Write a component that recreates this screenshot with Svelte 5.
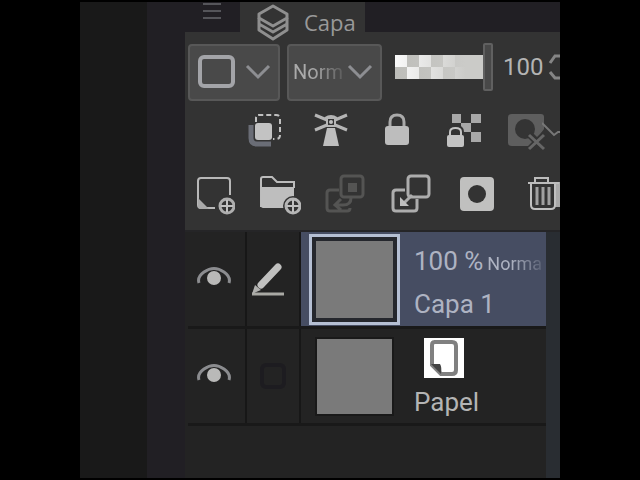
<script lang="ts">
	type Layer = {
		name: string;
		opacity?: string;
		mode?: string;
		paper?: boolean;
	};

	const layers: Layer[] = [
		{ name: 'Capa 1', opacity: '100 %', mode: 'Norma' },
		{ name: 'Papel', paper: true }
	];

	let selected = $state('Capa 1');
	let opacity = $state(100);
</script>

<main class="stage">
	<div class="canvas"></div>
	<div class="gutter"></div>
	<section class="panel" aria-label="Capa">
		<header class="tabs">
			<button class="menu" aria-label="Menu">
				<svg width="18" height="18" viewBox="0 0 18 18">
					<path d="M0 2h18M0 9h18M0 16h18" stroke="#55555a" stroke-width="2" />
				</svg>
			</button>
			<button class="tab">
				<svg width="34" height="38" viewBox="0 0 34 38" fill="none" stroke="#8f8f8f" stroke-width="3" stroke-linejoin="round">
					<path d="M17 3 31 11v4L17 23 3 15v-4z" />
					<path d="M3 15v6l14 8 14-8v-6M3 21v6l14 9 14-9v-6" />
				</svg>
				<span>Capa</span>
			</button>
		</header>

		<div class="options">
			<button class="box" aria-label="Layer colour">
				<svg width="38" height="34" viewBox="0 0 38 34" fill="none">
					<rect x="2" y="2" width="33" height="29" rx="4" stroke="#a3a4a8" stroke-width="4" />
				</svg>
				<svg class="chevron" width="28" height="18" viewBox="0 0 28 18" fill="none">
					<path d="M3 3 14 14 25 3" stroke="#8d8e92" stroke-width="3" />
				</svg>
			</button>
			<div class="box mode">
				<select aria-label="Blending mode">
					<option>Norm</option>
				</select>
				<svg class="chevron" width="28" height="18" viewBox="0 0 28 18" fill="none">
					<path d="M3 3 14 14 25 3" stroke="#8d8e92" stroke-width="3" />
				</svg>
			</div>
			<input class="slider" type="range" min="0" max="100" bind:value={opacity} aria-label="Opacity" />
			<input class="amount" type="text" bind:value={opacity} aria-label="Opacity value" />
			<button class="spin" aria-label="Change value">
				<svg width="22" height="30" viewBox="0 0 22 30" fill="none" stroke="#858585" stroke-width="3">
					<path d="M2 11 7 4h8l5 7M2 20l5 6h8l5-6" />
				</svg>
			</button>
		</div>

		<div class="tools first">
			<button aria-label="Clip to layer below">
				<svg width="42" height="42" viewBox="0 0 42 42" fill="none">
					<path d="M7 16v13q0 6 6 6h14" stroke="#6a6d76" stroke-width="5" />
					<rect x="11" y="14" width="17" height="17" rx="3" fill="#c3c3c3" />
					<path d="M12 13V9q0-3 3-3h17q4 0 4 4v16q0 4-4 4h-3" stroke="#c0c0c0" stroke-width="2" stroke-dasharray="5 3" />
				</svg>
			</button>
			<button aria-label="Reference layer">
				<svg width="42" height="42" viewBox="0 0 42 42" fill="none">
					<path d="M5 6 17 11M5 21l12-5M37 6l-12 5M37 21l-12-5" stroke="#b5b5b5" stroke-width="3" />
					<path d="M15 9q6-4 12 0" stroke="#b5b5b5" stroke-width="2" />
					<rect x="17" y="9" width="8" height="8" stroke="#b5b5b5" stroke-width="2" />
					<circle cx="21" cy="13" r="2" fill="#bebebe" />
					<path d="M17 19h8l4 18H13z" fill="#bebebe" />
				</svg>
			</button>
			<button aria-label="Lock layer">
				<svg width="42" height="42" viewBox="0 0 42 42" fill="none">
					<path d="M14 18v-5q0-7 7-7t7 7v5" stroke="#aaa" stroke-width="3" />
					<rect x="9" y="17" width="24" height="19" rx="3" fill="#bdbdbd" />
				</svg>
			</button>
			<button aria-label="Lock transparent pixels">
				<svg width="42" height="42" viewBox="0 0 42 42" fill="none">
					<path d="M10 5h9v9h-9zM29 5h10v9H29zM19 14h10v9H19zM29 23h10v10H29z" fill="#a8a8a8" />
					<path d="M8 27v-4q0-4 5.500-4t5.500 4v4" stroke="#333" stroke-width="6" />
					<path d="M8 27v-4q0-4 5.500-4t5.500 4v4" stroke="#c3c3c3" stroke-width="2" />
					<rect x="5" y="26" width="17" height="12" rx="2" fill="#c3c3c3" />
				</svg>
			</button>
			<button aria-label="Enable mask">
				<svg width="42" height="42" viewBox="0 0 42 42" fill="none">
					<path d="M4 5h29q3 0 3 3v12l-12 17H4q-4 0-4-3V8q0-3 4-3z" fill="#5e5e5e" />
					<circle cx="17" cy="20" r="10" fill="#343434" />
					<path d="m21 25 16 16M37 25 21 41" stroke="#333" stroke-width="7" />
					<path d="m21 26 15 14M36 26 21 40" stroke="#666" stroke-width="3" />
				</svg>
			</button>
			<button class="ruler" aria-label="Ruler range">
				<svg width="24" height="42" viewBox="0 0 24 42" fill="none">
					<path d="M0 14 12 26l4-3h8" stroke="#777" stroke-width="2" />
				</svg>
			</button>
		</div>

		<div class="tools">
			<button aria-label="New raster layer">
				<svg width="42" height="42" viewBox="0 0 42 42" fill="none">
					<path d="M22 35H8q-3 0-3-3V8q0-3 3-3h26q3 0 3 3v14" stroke="#b8b8b8" stroke-width="2" />
					<path d="M5 25 16 36H8q-3 0-3-3z" fill="#aaa" />
					<circle cx="34" cy="33" r="10" fill="#333" />
					<circle cx="34" cy="33" r="7" stroke="#aeaeae" stroke-width="3" />
					<path d="M34 27v12M28 33h12" stroke="#c0c0c0" stroke-width="2" />
				</svg>
			</button>
			<button aria-label="New layer folder">
				<svg width="42" height="42" viewBox="0 0 42 42" fill="none">
					<path d="M2 34V6q0-2 2-2h9l5 5h17v6" stroke="#bcbcbc" stroke-width="2" />
					<path d="M2 14h33v21H4q-2 0-2-2z" fill="#bebebe" />
					<circle cx="34" cy="33" r="10" fill="#333" />
					<circle cx="34" cy="33" r="7" stroke="#b5b5b5" stroke-width="3" />
					<path d="M34 27v12M28 33h12" stroke="#c0c0c0" stroke-width="2" />
				</svg>
			</button>
			<button aria-label="Transfer to lower layer">
				<svg width="42" height="42" viewBox="0 0 42 42" fill="none" stroke="#545453" stroke-width="3">
					<rect x="16" y="3" width="22" height="21" rx="3" />
					<path d="M23 10h9v9h-9z" fill="#545453" stroke="none" />
					<path d="M14 17H5q-3 0-3 3v15q0 3 3 3h17q3 0 3-3M26 25q0 7-8 7h-7M16 26l-6 6 6 5" />
				</svg>
			</button>
			<button aria-label="Combine with layer below">
				<svg width="42" height="42" viewBox="0 0 42 42" fill="none" stroke="#adadad" stroke-width="3">
					<rect x="17" y="3" width="21" height="21" rx="3" />
					<path d="M14 17H5q-3 0-3 3v15q0 3 3 3h18q3 0 3-3v-9" />
					<path d="m21 22-9 9" />
					<path d="m9 24 9 9H9z" fill="#c0c0c0" stroke="none" />
				</svg>
			</button>
			<button aria-label="Create layer mask">
				<svg width="42" height="42" viewBox="0 0 42 42">
					<rect x="3" y="4" width="34" height="34" rx="4" fill="#c0c0bf" />
					<circle cx="20" cy="21" r="9" fill="#333" />
				</svg>
			</button>
			<button aria-label="Delete layer">
				<svg width="42" height="42" viewBox="0 0 42 42" fill="none">
					<path d="M30 9h12v25H28z" fill="#aaa" />
					<path d="M8 10h24v22q0 4-4 4H12q-4 0-4-4z" fill="#333" stroke="#c0c0c0" stroke-width="2" />
					<path d="M5 10h31M12 9V5h13v4" stroke="#bcbcbc" stroke-width="2" />
					<path d="M14 14v18M20 14v18M26 14v18" stroke="#a0a0a0" stroke-width="3" />
				</svg>
			</button>
		</div>

		<div class="list">
			<ul>
				{#each layers as layer}
					<li class:active={layer.name === selected}>
						<button class="eye" aria-label="Show or hide {layer.name}">
							<svg width="34" height="22" viewBox="0 0 34 22" fill="none">
								<path d="M2 17q-2-6 5-11 10-7 20 0 7 5 5 11" stroke="#8b8c8f" stroke-width="3" />
								<circle cx="17" cy="12" r="7" fill="#b9b9b8" />
							</svg>
						</button>
						<div class="edit">
							{#if layer.name === selected}
								<svg width="44" height="34" viewBox="0 0 44 34" fill="none">
									<path d="M1 32h32" stroke="#a9a9a4" stroke-width="3" />
									<path d="M10 23 27 5" stroke="#c0c0bf" stroke-width="7" stroke-linecap="round" />
									<path d="M4 23 10 28 1 32z" fill="#b0b0ae" />
								</svg>
							{:else}
								<svg width="28" height="28" viewBox="0 0 28 28" fill="none">
									<rect x="3" y="3" width="22" height="22" rx="4" stroke="#1d1c20" stroke-width="4" />
								</svg>
							{/if}
						</div>
						<button class="layer" onclick={() => (selected = layer.name)}>
							<span class="thumb"></span>
							<span class="info">
								{#if layer.paper}
									<svg class="paper" width="40" height="40" viewBox="0 0 40 40">
										<path d="M0 0h40v40H0z" fill="#fff" />
										<path d="M10 4h18q4 0 4 4v24q0 4-4 4H17L8 27V7q0-3 3-3z" fill="#fff" stroke="#808080" stroke-width="4" />
										<path d="M7 26h9q2 3 1 10z" fill="#444" />
									</svg>
								{:else}
									<span class="status">
										<span>{layer.opacity}</span>
										<span class="fade">{layer.mode}</span>
									</span>
								{/if}
								<span>{layer.name}</span>
							</span>
						</button>
					</li>
				{/each}
			</ul>
			<div class="scrollbar"></div>
		</div>
	</section>
</main>

<style>
	:global(body) {
		margin: 0;
		background: #000;
	}

	* {
		box-sizing: border-box;
	}

	.stage {
		display: flex;
		min-height: 100vh;
		padding: 2px 12.5%;
		font-family: Roboto, sans-serif;
		font-size: 26px;
		line-height: 32px;
		color: #b4b4b4;
	}

	button,
	select,
	input {
		margin: 0;
		padding: 0;
		border: 0;
		background: none;
		font: inherit;
		color: inherit;
	}

	svg {
		display: block;
		flex: none;
	}

	.canvas {
		flex: 0 0 67px;
		background: #191919;
	}

	.gutter {
		flex: 0 0 38px;
		background: #211f24;
	}

	.panel {
		flex: 1;
		min-width: 0;
		display: flex;
		flex-direction: column;
		overflow: hidden;
		background: #333;
	}

	.tabs {
		display: flex;
		height: 30px;
		background: #211f24;
	}

	.menu {
		display: flex;
		width: 55px;
		padding-left: 18px;
	}

	.tab {
		display: flex;
		align-items: center;
		gap: 14px;
		width: 125px;
		height: 40px;
		padding-left: 16px;
		background: #333;
		font-family: 'Open Sans', sans-serif;
		font-size: 22px;
		color: #999;
	}

	.options {
		display: flex;
		align-items: center;
		padding: 11px 0 0 3px;
	}

	.box {
		display: flex;
		flex: none;
		align-items: center;
		width: 92px;
		height: 57px;
		margin-right: 7px;
		padding: 0 6px 0 8px;
		border: 2px solid #585858;
		border-radius: 4px;
		background: #494949;
	}

	.chevron {
		margin-left: auto;
	}

	.mode {
		position: relative;
		width: 95px;
		margin-right: 13px;
		padding: 0 6px 0 4px;
	}

	.mode select {
		appearance: none;
		flex: 0 0 100%;
		height: 32px;
		font-size: 20px;
		color: #aaa;
		mask-image: linear-gradient(90deg, #000 20px, #0003 50px);
	}

	.mode .chevron {
		position: absolute;
		right: 6px;
		pointer-events: none;
	}

	.slider {
		appearance: none;
		flex: none;
		width: 98px;
		height: 48px;
		background:
			linear-gradient(90deg, transparent, #cbcbc8 80%) 0 50% / 88px 24px no-repeat,
			repeating-conic-gradient(#bdbdb9 0 25%, #fafafa 0 50%) 0 12px / 24px 24px repeat-x;
	}

	.slider::-webkit-slider-thumb {
		appearance: none;
		width: 10px;
		height: 48px;
		border: 2px solid #606060;
		border-radius: 2px;
		background: #484848;
	}

	.slider,
	.amount,
	.spin {
		margin-bottom: 10px;
	}

	.amount {
		flex: none;
		width: 45px;
		height: 32px;
		margin-left: 10px;
		font-size: 24px;
	}

	.spin {
		flex: none;
	}

	.tools {
		display: flex;
		gap: 24px;
		padding: 22px 0 15px 8px;
	}

	.tools button {
		flex: none;
	}

	.tools.first {
		padding: 8px 0 0 59px;
	}

	.tools .ruler {
		margin-left: -32px;
	}

	.list {
		flex: 1;
		display: flex;
		border-top: 2px solid #252527;
		background: #232323;
	}

	ul {
		flex: 1;
		margin: 0;
		padding: 0 0 0 3px;
		list-style: none;
	}

	.scrollbar {
		width: 14px;
		background: #292d32;
	}

	li {
		display: flex;
		height: 97px;
		border-bottom: 3px solid #191919;
	}

	.eye,
	.edit {
		display: flex;
		flex: none;
		align-items: center;
		justify-content: center;
		border-right: 2px solid #171717;
	}

	.eye {
		width: 59px;
		padding: 0 6px 4px 0;
	}

	.edit {
		width: 54px;
	}

	.layer {
		flex: 1;
		display: flex;
		align-items: center;
		min-width: 0;
		padding-left: 8px;
		text-align: left;
	}

	.active .layer {
		background: #464d62;
		color: #aeb3c2;
	}

	.thumb {
		flex: none;
		width: 91px;
		height: 91px;
		margin-right: 14px;
		border: 6px solid #232323;
		background: #7a7a7a;
		box-shadow: inset 0 0 0 2px #191919;
	}

	.active .thumb {
		border: 3px solid #b5bfd3;
		box-shadow: inset 0 0 0 4px #25272d;
	}

	.info {
		display: flex;
		flex-direction: column;
		gap: 8px;
		min-width: 0;
		padding-top: 4px;
	}

	.active .info {
		padding-top: 6px;
	}

	.status {
		display: flex;
		align-items: baseline;
		gap: 4px;
	}

	.status span {
		white-space: nowrap;
	}

	.status .fade {
		font-size: 18px;
		mask-image: linear-gradient(90deg, #000 24px, #0003);
	}

	.paper {
		margin-left: 10px;
	}
</style>
